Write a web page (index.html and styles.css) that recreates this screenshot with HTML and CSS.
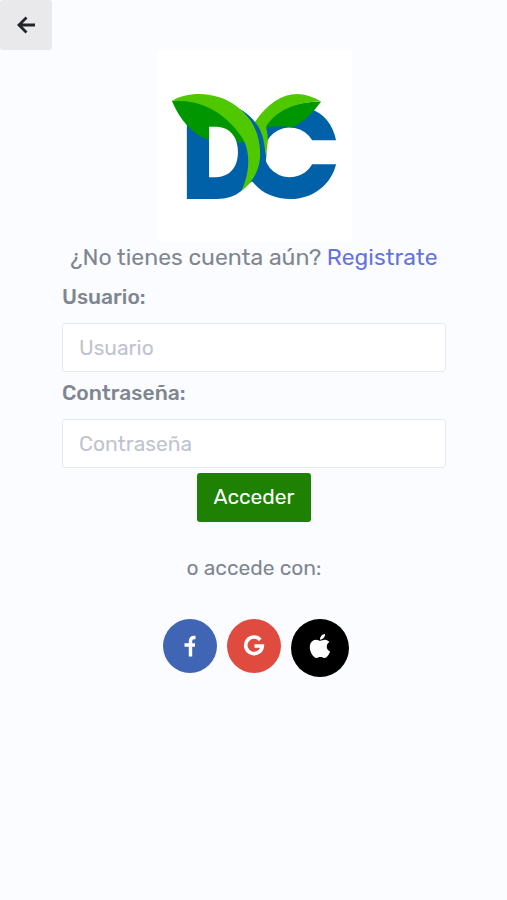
FILE: index.html
```html
<!DOCTYPE html>
<html lang="es">
<head>
<meta charset="utf-8">
<meta name="viewport" content="width=device-width, initial-scale=1">
<title>Acceder</title>
<link rel="stylesheet" href="styles.css">
</head>
<body>
<header>
  <button class="back" type="button" aria-label="Volver">
    <svg width="20" height="20" viewBox="0 0 20 20" aria-hidden="true"><path d="M10.500 2.500 3 10l7.500 7.500M3 10h16" fill="none" stroke="currentColor" stroke-width="2.800"/></svg>
  </button>
</header>
<main class="login">
  <svg class="logo" viewBox="20 30 588 576" role="img" aria-label="DC">
    <path fill="#fff" d="M20 30h588v576H20z"/>
    <path fill="#0061a8" d="M110 235 200 205H265C310 225 350 280 350 342C350 380 330 400 305 425L274 454C255 470 230 478 200 478H110z"/>
    <path fill="#0061a8" d="M560 301C550 252 522 222 490 209L400 205 315 247 305 421C330 458 375 478 422 478C490 478 545 435 560 373H488A77 75 0 1 1 488 301z"/>
    <path fill="#0061a8" d="M270 208Q298 225 315 250Q348 290 348 345L325 430 304 425 290 270z"/>
    <path fill="#009600" d="M65 182C90 240 125 282 177 300H272L300 310 285 225 150 168z"/>
    <path fill="#fff" d="M177 260H200C240 262 264 290 264 337C264 382 239 412 197 412H177z"/>
    <path fill="#009600" d="M225 262C252 275 262 300 264 309L290 303 280 280 230 230z"/>
    <path fill="#50c800" d="M65 182C115 152 200 153 260 198C310 235 331 285 331 342C331 391 309 425 274 454C301 399 304 326 272 286C218 211 148 178 65 182z"/>
    <path fill="#009600" d="M348 262Q385 185 515 184C485 225 459 247 427 262Q383 255 350 263z"/>
    <path fill="#50c800" d="M315 246C374 160 443 140 515 184C440 184 377 212 349 260Q360 304 347 346C344 299 336 270 315 246z"/>
  </svg>
  <p class="signup">¿No tienes cuenta aún? <a href="#registro">Registrate</a></p>
  <form class="form">
    <label for="user">Usuario:</label>
    <input id="user" type="text" placeholder="Usuario" autocomplete="username">
    <label for="password">Contraseña:</label>
    <input id="password" type="password" placeholder="Contraseña" autocomplete="current-password">
    <button class="submit" type="submit">Acceder</button>
  </form>
  <p class="alternative">o accede con:</p>
  <div class="social">
    <button class="round facebook" type="button" aria-label="Facebook">
      <svg width="22" height="22" viewBox="0 0 22 22" aria-hidden="true"><path d="M16.500 2.500h-1.500q-3.500 0-3.500 3.500v15.500M5.500 10h10.500" fill="none" stroke="#fff" stroke-width="3.400"/></svg>
    </button>
    <button class="round google" type="button" aria-label="Google">
      <svg width="22" height="22" viewBox="0 0 22 22" aria-hidden="true"><path d="M17.300 4.900A8.300 8.300 0 1 0 19.300 11H11.500" fill="none" stroke="#fff" stroke-width="3.600"/></svg>
    </button>
    <button class="round apple" type="button" aria-label="Apple">
      <svg width="32" height="32" viewBox="0 0 24 24" aria-hidden="true"><path fill="#fff" d="M17.050 20.280c-.98.95-2.050.8-3.080.35-1.090-.46-2.090-.48-3.240 0-1.440.62-2.200.44-3.060-.35C2.790 15.250 3.510 7.590 9.050 7.310c1.350.07 2.290.74 3.080.8 1.180-.24 2.310-.93 3.570-.84 1.510.12 2.650.72 3.400 1.800-3.120 1.870-2.380 5.980.48 7.130-.57 1.500-1.310 2.990-2.540 4.090zM12.030 7.250c-.15-2.230 1.660-4.070 3.740-4.250.29 2.580-2.340 4.500-3.740 4.250z"/></svg>
    </button>
  </div>
</main>
</body>
</html>
```

FILE: styles.css
```css
* {
  box-sizing: border-box;
}

body {
  margin: 0;
  min-height: 100vh;
  background: #fafcff;
  color: #808690;
  font-family: Rubik, Roboto, "Liberation Sans", sans-serif;
  font-size: 21px;
  line-height: 32px;
}

button,
input {
  font: inherit;
}

button {
  border: 0;
  cursor: pointer;
}

.back {
  display: flex;
  align-items: center;
  justify-content: center;
  width: 52px;
  height: 50px;
  padding: 0;
  border-radius: 3px;
  background: #e9e9eb;
  color: #212529;
}

.login {
  display: flex;
  flex-direction: column;
  align-items: center;
  padding: 0 61px 0 62px;
}

.logo {
  width: 195px;
  height: 192px;
}

.signup {
  margin: 0;
  font-size: 23px;
  line-height: 30px;
  white-space: nowrap;
}

.signup a {
  color: #6574db;
  text-decoration: none;
}

.form {
  display: flex;
  flex-direction: column;
  width: 100%;
  padding-top: 9px;
}

.form label {
  padding-bottom: 10px;
  font-weight: 500;
}

.form input {
  width: 100%;
  height: 49px;
  margin-bottom: 5px;
  padding: 0 16px 1px;
  border: 1px solid #e6e9ef;
  border-radius: 3px;
  background: #fff;
  color: #808690;
}

.form input::placeholder {
  color: #c0c3ce;
  opacity: 1;
}

.submit {
  align-self: center;
  height: 49px;
  padding: 0 16px 1px;
  border-radius: 3px;
  background: #1e8104;
  color: #fff;
}

.alternative {
  margin: 30px 0 32px;
}

.social {
  display: flex;
  gap: 10px;
  padding: 3px 0 0 3px;
}

.round {
  display: flex;
  align-items: center;
  justify-content: center;
  width: 54px;
  height: 54px;
  padding: 0;
  border-radius: 50%;
}

.facebook {
  background: #4065b4;
}

.google {
  background: #e04b3f;
}

.apple {
  width: 58px;
  height: 58px;
  padding-bottom: 4px;
  background: #000;
}
```
